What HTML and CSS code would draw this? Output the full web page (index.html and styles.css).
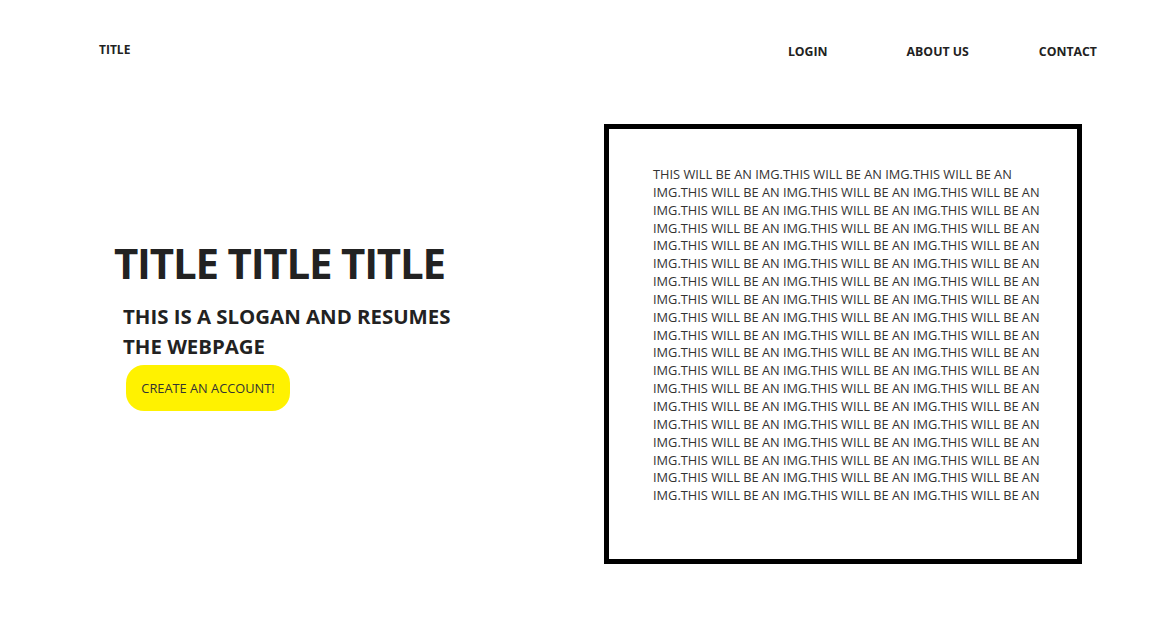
FILE: index.html
```html
<!DOCTYPE html>
<html>
    <head>
        <meta name="viewport" content="width=device-width">
        <title>Title</title>
        <link rel="stylesheet" href="styles.css">
    </head>
    <body>
        <div class="nav">
            <div class="brand">TITLE</div>
            <div class="links">
                <a href="#">LOGIN</a>
                <a href="#">ABOUT US</a>
                <a href="#">CONTACT</a>
            </div>
        </div>
        <div class="main">
            <div class="hero">
                <h1>TITLE TITLE TITLE</h1>
                <h2>THIS IS A SLOGAN AND RESUMES THE WEBPAGE</h2>
                <button>CREATE AN ACCOUNT!</button>
            </div>
            <div class="picture">
                <p id="img-text"></p>
            </div>
        </div>
        <script>
            var txt = "";
            for (var i = 0; i < 57; i++) {
                txt += "THIS WILL BE AN IMG.";
            }
            document.getElementById("img-text").textContent = txt.slice(0, -4);
        </script>
    </body>
</html>
```

FILE: styles.css
```css
body{
    margin:0;
    font-family:"Open Sans", "Liberation Sans", sans-serif;
    color:#222;
    background:#fff;
}
.nav
{
    display:flex;
    justify-content:space-between;
    align-items:flex-start;
    padding:42px 54px 0 99px;
    height:82px;
}
.brand{font-size:12px;font-weight:bold;line-height:16px}
.links{display:flex;padding-top:1px}
.links a{color:#222;text-decoration:none;font-size:12.3px;font-weight:bold;line-height:18px}
.links a:nth-child(2){margin-left:79px}
.links a:nth-child(3){margin-left:70px}

.main
{
    display:flex;
    align-items:flex-start;
    padding-left:114px;
}
.hero
{
    width:490px;
    padding-top:110px;
}
h1
{
    margin:0;
    font-size:42px;
    font-weight:bold;
    line-height:58px;
    letter-spacing:-1.2px;
}
h2
{
    margin:9px 0 0 9px;
    width:340px;
    font-size:20.4px;
    font-weight:bold;
    line-height:30px;
}
button
{
    margin:4px 0 0 12px;
    background:#fff200;
    color:#333;
    border:none;
    outline:none;
    border-radius:18px;
    width:164px;
    height:46px;
    font-family:inherit;
    font-size:12.8px;
    cursor:pointer;
}
.picture
{
    width:468px;
    height:430px;
    border:5px solid #000;
    box-sizing:content-box;
}
.picture p
{
    margin:37px 0 0 44px;
    width:396px;
    font-size:12.8px;
    line-height:17.85px;
    color:#333;
}
```
